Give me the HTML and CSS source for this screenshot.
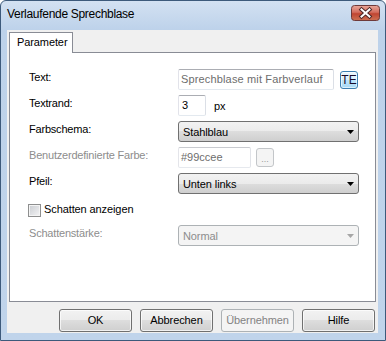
FILE: index.html
```html
<!DOCTYPE html>
<html lang="de">
<head>
<meta charset="utf-8">
<title>Verlaufende Sprechblase</title>
<link rel="stylesheet" href="styles.css">
</head>
<body>
<div class="window">
  <div class="titlebar">
    <span class="title">Verlaufende Sprechblase</span>
    <span class="close">
      <svg width="29" height="16" viewBox="0 0 29 16">
        <defs>
          <linearGradient id="cg" x1="0" y1="0" x2="0" y2="1">
            <stop offset="0" stop-color="#e8a89b"/>
            <stop offset="0.45" stop-color="#d46d5e"/>
            <stop offset="0.55" stop-color="#c04532"/>
            <stop offset="1" stop-color="#cd7254"/>
          </linearGradient>
        </defs>
        <rect x="0.5" y="0.5" width="28" height="15" rx="3" fill="url(#cg)" stroke="#6e3a3a"/>
        <path d="M10.5 4.5 L18.5 11.5 M18.5 4.5 L10.5 11.5" stroke="#4a2626" stroke-width="4" stroke-linecap="square"/>
        <path d="M10.5 4.5 L18.5 11.5 M18.5 4.5 L10.5 11.5" stroke="#ffffff" stroke-width="2" stroke-linecap="square"/>
      </svg>
    </span>
  </div>
  <div class="client">
    <div class="tabs"><div class="tab">Parameter</div></div>
    <div class="panel">
      <div class="form">
        <div class="lbl">Text:</div>
        <div class="ctl">
          <div class="tb tb-text">Sprechblase mit Farbverlauf</div>
          <div class="te">TE</div>
        </div>

        <div class="lbl">Textrand:</div>
        <div class="ctl">
          <div class="tb tb-small">3</div>
          <span class="unit">px</span>
        </div>

        <div class="lbl">Farbschema:</div>
        <div class="ctl">
          <div class="dd"><span>Stahlblau</span><svg class="arrow" width="7" height="4" viewBox="0 0 7 4"><polygon points="0,0 7,0 3.5,4" fill="#000"/></svg></div>
        </div>

        <div class="lbl dis">Benutzerdefinierte Farbe:</div>
        <div class="ctl">
          <div class="tb tb-color">#99ccee</div>
          <div class="dots">...</div>
        </div>

        <div class="lbl">Pfeil:</div>
        <div class="ctl">
          <div class="dd"><span>Unten links</span><svg class="arrow" width="7" height="4" viewBox="0 0 7 4"><polygon points="0,0 7,0 3.5,4" fill="#000"/></svg></div>
        </div>

        <div class="chkrow">
          <span class="chk"></span>
          <span>Schatten anzeigen</span>
        </div>

        <div class="lbl dis">Schattenstärke:</div>
        <div class="ctl">
          <div class="dd dd-dis"><span>Normal</span><svg class="arrow" width="7" height="4" viewBox="0 0 7 4"><polygon points="0,0 7,0 3.5,4" fill="#a6a6a6"/></svg></div>
        </div>
      </div>
    </div>
    <div class="buttons">
      <div class="btn">OK</div>
      <div class="btn">Abbrechen</div>
      <div class="btn btn-dis">Übernehmen</div>
      <div class="btn">Hilfe</div>
    </div>
  </div>
</div>
</body>
</html>
```

FILE: styles.css
```css
body {
  margin: 0;
  font-family: "Liberation Sans", Arial, sans-serif;
  font-size: 11px;
  color: #000;
}

.window {
  width: 386px;
  height: 341px;
  box-sizing: border-box;
  border: 1px solid #3d5a7b;
  border-radius: 6px 6px 0 0;
  background: linear-gradient(#d3e1f2 0, #bdd2ea 29px, #c0d4eb 100%);
  padding: 0 7px 7px 6px;
  display: flex;
  flex-direction: column;
}

.titlebar {
  height: 29px;
  flex: none;
  display: flex;
  justify-content: space-between;
  align-items: flex-start;
  margin-right: -2px;
}

.title {
  font-size: 12px;
  line-height: 15px;
  letter-spacing: -0.3px;
  padding-top: 6px;
}

.close {
  margin-top: 4px;
  display: block;
  height: 16px;
}
.close svg { display: block; }

.client {
  flex: 1;
  background: #f0f0f0;
  padding: 2px 2px 0 2px;
  display: flex;
  flex-direction: column;
}

.tabs {
  display: flex;
  height: 20px;
  position: relative;
  z-index: 1;
}

.tab {
  width: 64px;
  height: 21px;
  box-sizing: border-box;
  border: 1px solid #898c95;
  border-bottom: none;
  background: #fff;
  padding-left: 7px;
  line-height: 19px;
  letter-spacing: -0.1px;
}

.panel {
  height: 250px;
  box-sizing: border-box;
  border: 1px solid #898c95;
  background: #fff;
  padding: 16px 0 0 19px;
}

.form {
  display: grid;
  grid-template-columns: 149px 1fr;
  grid-auto-rows: 21px;
  row-gap: 5px;
}

.lbl {
  line-height: 16px;
  letter-spacing: -0.2px;
}
.dis { color: #8d8d8d; }

.ctl {
  display: flex;
  align-items: center;
}

.tb {
  box-sizing: border-box;
  height: 21px;
  border: 1px solid;
  border-color: #abadb3 #dbdfe6 #e3e9ef #e2e3ea;
  border-radius: 2px;
  background: #fff;
  padding: 0 2px;
  line-height: 19px;
  white-space: nowrap;
  overflow: hidden;
}

.tb-text {
  width: 156px;
  color: #6d6d6d;
  letter-spacing: 0.15px;
}

.te {
  margin-left: 6px;
  width: 18px;
  height: 18px;
  box-sizing: border-box;
  border: 1px solid #3c7fb1;
  border-radius: 3px;
  background: linear-gradient(#eaf6fd 0, #d9f0fc 50%, #bee6fd 50%, #a7d9f5 100%);
  box-shadow: inset 0 0 0 1px rgba(255,255,255,0.6);
  font-size: 12px;
  line-height: 16px;
  text-align: center;
  color: #1a0a2a;
}

.tb-small {
  width: 28px;
  padding-left: 3px;
}

.unit {
  margin-left: 8px;
}

.dd {
  box-sizing: border-box;
  width: 181px;
  height: 21px;
  border: 1px solid #707070;
  border-radius: 3px;
  background: linear-gradient(#f2f2f2 0, #ebebeb 50%, #dddddd 50%, #cfcfcf 100%);
  display: flex;
  align-items: center;
  justify-content: space-between;
  padding: 0 4px 0 4px;
  letter-spacing: -0.1px;
}
.dd .arrow { display: block; }

.dd-dis {
  border-color: #adb2b5;
  background: #f4f4f4;
  color: #8d8d8d;
}

.tb-color {
  width: 73px;
  color: #6d6d6d;
  border-color: #c9cbd0 #e1e3e8 #e6e9ee #e4e5ea;
}

.dots {
  margin-left: 5px;
  width: 18px;
  height: 19px;
  box-sizing: border-box;
  border: 1px solid #c3c6c9;
  border-radius: 3px;
  background: #f4f4f4;
  color: #9a9a9a;
  text-align: center;
  line-height: 20px;
  font-size: 9px;
}

.chkrow {
  grid-column: 1 / span 2;
  display: flex;
  align-items: center;
  margin-left: -1px;
  padding-bottom: 1px;
  letter-spacing: -0.1px;
}

.chk {
  width: 13px;
  height: 13px;
  box-sizing: border-box;
  border: 1px solid #8e8f8f;
  background: linear-gradient(135deg, #c9ccd1, #f4f4f5);
  box-shadow: inset 0 0 0 1px #f4f4f4;
  margin-right: 3px;
  margin-top: 2px;
}

.buttons {
  margin-top: 7px;
  display: flex;
  justify-content: flex-end;
  gap: 8px;
  padding-right: 1px;
}

.btn {
  width: 73px;
  height: 23px;
  box-sizing: border-box;
  border: 1px solid #707070;
  border-radius: 3px;
  background: linear-gradient(#f2f2f2 0, #ebebeb 50%, #dddddd 50%, #cfcfcf 100%);
  box-shadow: inset 0 0 0 1px rgba(255,255,255,0.7);
  text-align: center;
  line-height: 21px;
  letter-spacing: -0.1px;
}

.btn-dis {
  border-color: #adb2b5;
  background: #f4f4f4;
  box-shadow: none;
  color: #838383;
}
```
